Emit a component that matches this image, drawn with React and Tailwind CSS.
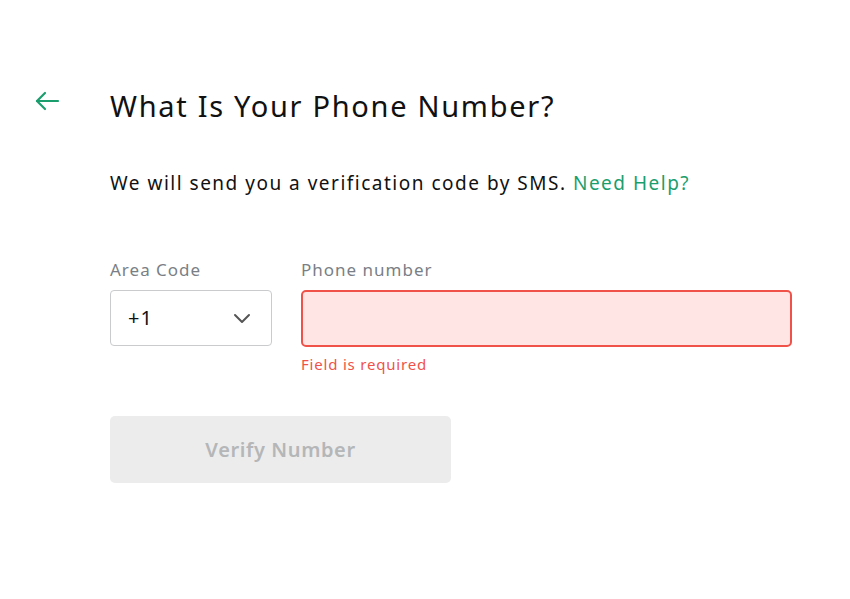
import React from "react";

export default function App() {
  return (
    <div className="w-[850px] h-[599px] bg-white relative" style={{ fontFamily: '"Noto Sans", "Open Sans", sans-serif' }}>
      <div className="flex pt-[84px]">
        <div className="w-[110px] flex pl-[34px] pt-[6px]">
          <svg width="26" height="22" viewBox="0 0 26 22" fill="none" stroke="#1b9e6e" strokeWidth="2.2" strokeLinecap="round" strokeLinejoin="round">
            <path d="M24 11H3" />
            <path d="M11 3L3 11l8 8" />
          </svg>
        </div>
        <div className="flex flex-col">
          <h1 className="text-[29px] leading-[44px] text-[#111] tracking-[1.7px]">What Is Your Phone Number?</h1>
          <p className="mt-[42px] text-[19px] leading-[26px] text-[#111] tracking-[1.5px]">
            We will send you a verification code by SMS. <span className="text-[#1b9e6e]">Need Help?</span>
          </p>
          <div className="flex gap-[29px] mt-[63px]">
            <div className="flex flex-col">
              <label className="text-[17px] leading-[22px] text-[#7a7f86] tracking-[1px]">Area Code</label>
              <div className="mt-[9px] w-[162px] h-[56px] border border-[#c9cbcd] rounded-[4px] flex items-center justify-between pl-[17px] pr-[20px]">
                <span className="text-[20px] text-[#111] tracking-[1px]">+1</span>
                <svg width="18" height="12" viewBox="0 0 18 12" fill="none" stroke="#555" strokeWidth="2" strokeLinecap="round" strokeLinejoin="round">
                  <path d="M2 3l7 7 7-7" />
                </svg>
              </div>
            </div>
            <div className="flex flex-col">
              <label className="text-[17px] leading-[22px] text-[#7a7f86] tracking-[1px]">Phone number</label>
              <div className="mt-[9px] w-[491px] h-[57px] border-2 border-[#f0524a] bg-[#ffe6e5] rounded-[5px]"></div>
              <span className="mt-[7px] text-[15px] leading-[20px] text-[#f0524a] tracking-[0.8px]">Field is required</span>
            </div>
          </div>
          <button className="mt-[42px] w-[341px] h-[67px] bg-[#ececec] rounded-[5px] text-[20px] font-semibold text-[#b4b6b8] flex items-center justify-center tracking-[0.6px]">
            Verify Number
          </button>
        </div>
      </div>
    </div>
  );
}
